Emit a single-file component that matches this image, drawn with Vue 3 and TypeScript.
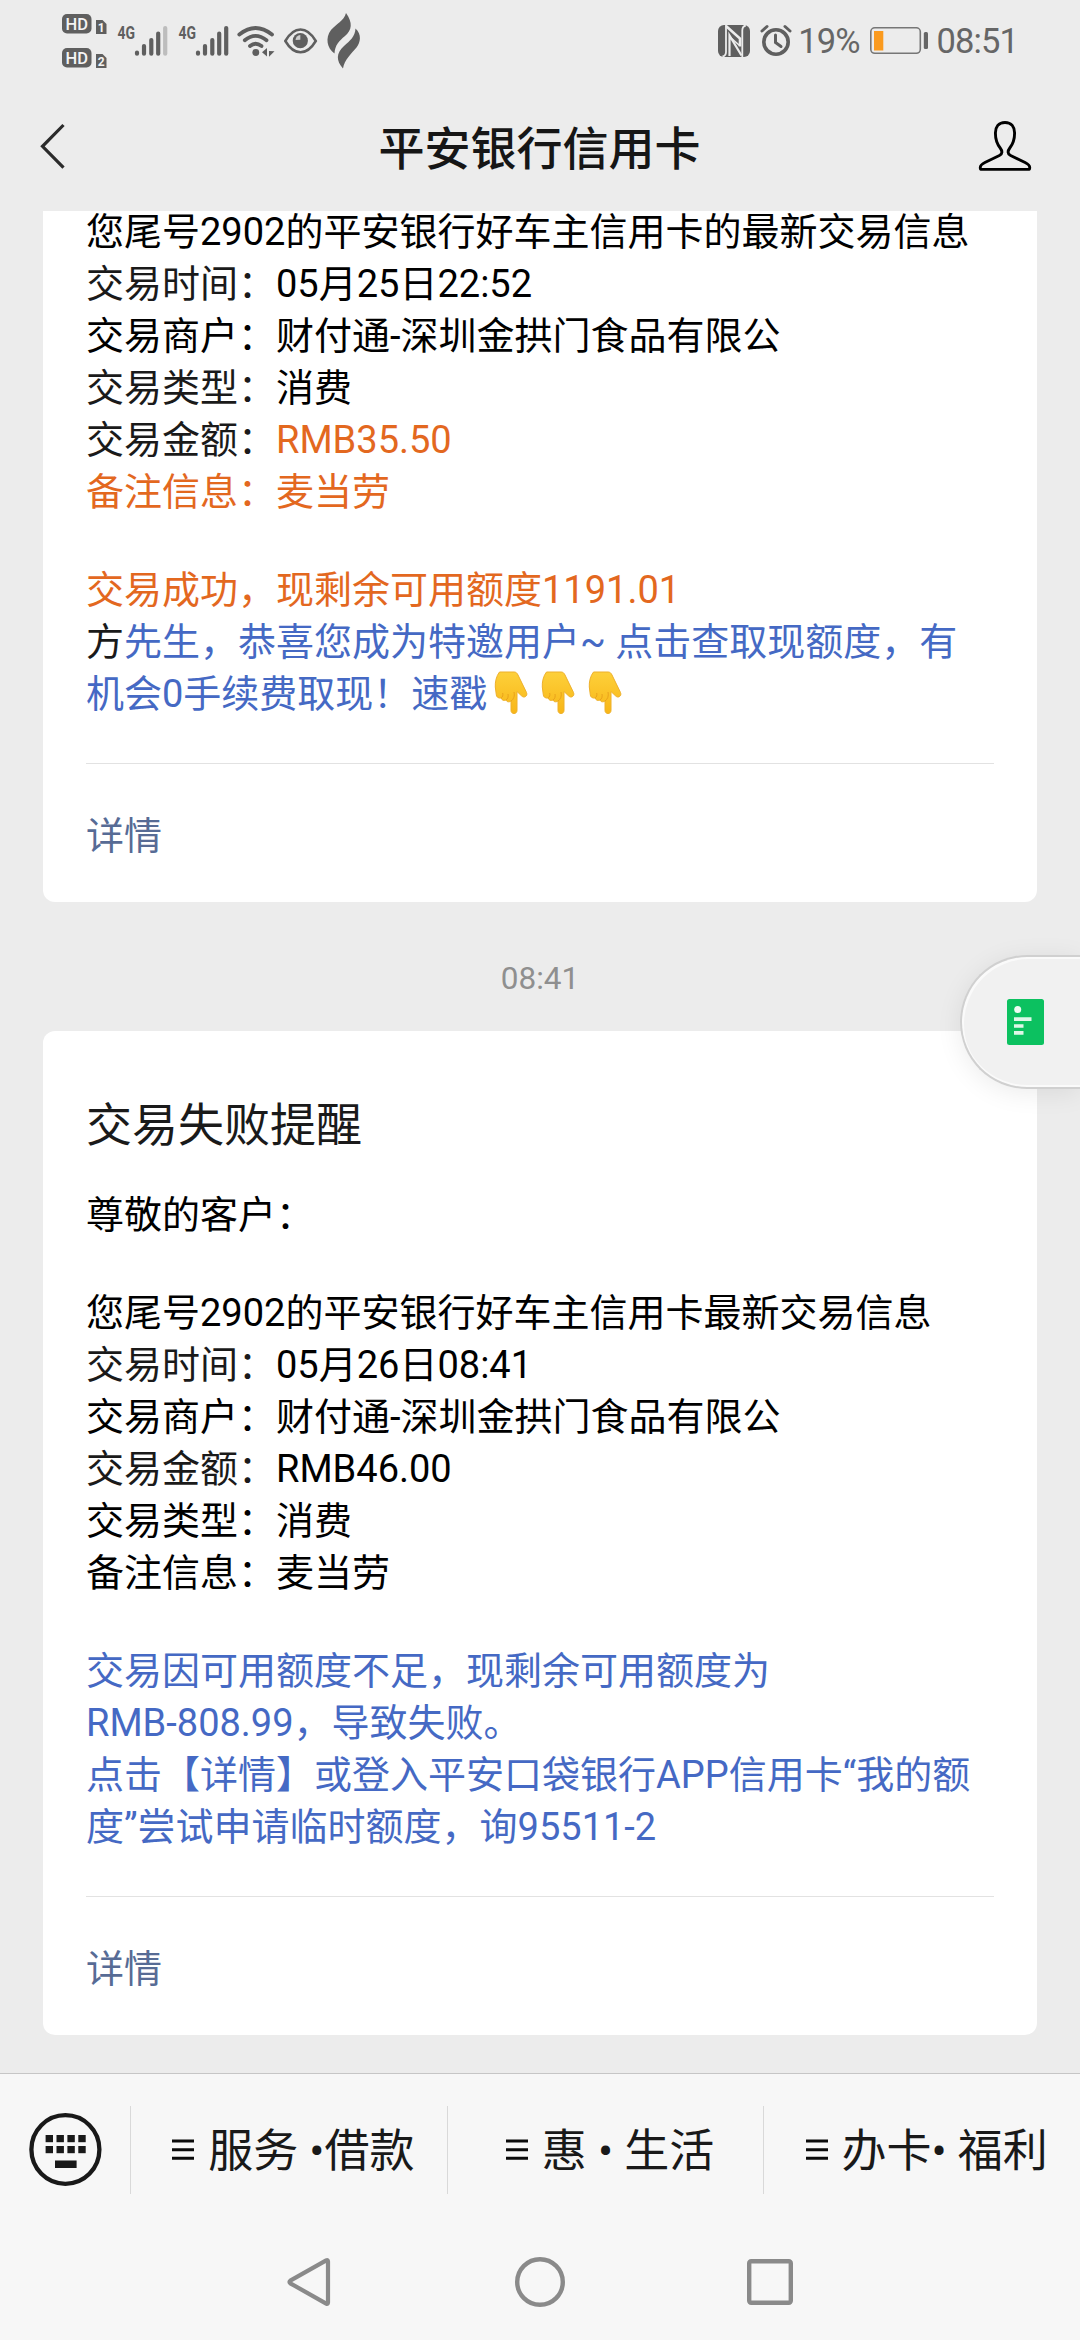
<script setup lang="ts">
type Tone = 'ink' | 'soft' | 'orange' | 'blue'

interface Span {
  text: string
  tone: Tone
  hands?: number
}

interface Card {
  title?: string
  blocks: Span[][][]
}

const field = (label: string, value: string, labelTone: Tone = 'ink', valueTone: Tone = 'ink'): Span[] => [
  { text: label + '：', tone: labelTone },
  { text: value, tone: valueTone },
]

const first: Card = {
  blocks: [
    [
      [{ text: '您尾号2902的平安银行好车主信用卡的最新交易信息', tone: 'ink' }],
      field('交易时间', '05月25日22:52', 'soft'),
      field('交易商户', '财付通-深圳金拱门食品有限公'),
      field('交易类型', '消费', 'soft'),
      field('交易金额', 'RMB35.50', 'soft', 'orange'),
      field('备注信息', '麦当劳', 'orange', 'orange'),
    ],
    [
      [{ text: '交易成功，现剩余可用额度1191.01', tone: 'orange' }],
      [
        { text: '方', tone: 'soft' },
        { text: '先生，恭喜您成为特邀用户~ 点击查取现额度，有', tone: 'blue' },
      ],
      [{ text: '机会0手续费取现！速戳', tone: 'blue', hands: 3 }],
    ],
  ],
}

const second: Card = {
  title: '交易失败提醒',
  blocks: [
    [[{ text: '尊敬的客户：', tone: 'ink' }]],
    [
      [{ text: '您尾号2902的平安银行好车主信用卡最新交易信息', tone: 'ink' }],
      field('交易时间', '05月26日08:41', 'soft'),
      field('交易商户', '财付通-深圳金拱门食品有限公'),
      field('交易金额', 'RMB46.00', 'soft'),
      field('交易类型', '消费'),
      field('备注信息', '麦当劳'),
    ],
    [
      [{ text: '交易因可用额度不足，现剩余可用额度为', tone: 'blue' }],
      [{ text: 'RMB-808.99，导致失败。', tone: 'blue' }],
      [{ text: '点击【详情】或登入平安口袋银行APP信用卡“我的额', tone: 'blue' }],
      [{ text: '度”尝试申请临时额度，询95511-2', tone: 'blue' }],
    ],
  ],
}

const entries: { card: Card; time?: string }[] = [{ card: first }, { card: second, time: '08:41' }]
const menus = ['服务 •借款', '惠 • 生活', '办卡• 福利']
const signals = [
  { id: 1, last: '#bdbdbd' },
  { id: 2, last: '#5f5f5f' },
]
</script>

<template>
  <div class="screen">
    <div class="status">
      <svg class="hd" width="46" height="56" viewBox="61 13 46 56">
        <g v-for="n in 2" :key="n" :transform="`translate(0 ${(n - 1) * 34})`">
          <rect x="62" y="14" width="29.5" height="19.5" rx="5" fill="#5f5f5f" />
          <text x="76.8" y="29.6" class="hd-text" text-anchor="middle">HD</text>
          <path d="M96 20h6.5l4 4V34H96z" fill="#5f5f5f" />
          <text x="101.2" y="31.600" class="sim-text" text-anchor="middle">{{ n }}</text>
        </g>
      </svg>
      <svg v-for="s in signals" :key="s.id" class="signal" width="50" height="32" viewBox="118 24 50 32">
        <text x="117.5" y="38" class="net-text" textLength="17.5" lengthAdjust="spacingAndGlyphs">4G</text>
        <g stroke="#5f5f5f" stroke-width="4.2" stroke-linecap="round">
          <path d="M137 51.5v1.2M144 45v7.7M151.3 39v13.7M158.2 32.5v20.2" />
          <path d="M165.2 27v25.7" :stroke="s.last" />
        </g>
      </svg>
      <svg class="wifi" width="38" height="32" viewBox="237 24 38 32">
        <g fill="none" stroke="#5f5f5f" stroke-width="3.8" stroke-linecap="round">
          <path d="M239.300 33.5Q255.500 20.500 272 33.5" />
          <path d="M244.800 39.300Q255.500 30.500 266.500 39.300" />
          <path d="M250 45Q255.500 40.500 261.500 45" />
        </g>
        <circle cx="255.800" cy="51.500" r="3.400" fill="#5f5f5f" />
        <path d="M267 47v8.500l-5-4.200zM269 50l5.500.2-5.500 5.500z" fill="#5f5f5f" />
      </svg>
      <svg class="eye" width="34" height="28" viewBox="284 26 34 28">
        <path d="M285.300 40Q292 28.500 300.500 28.500T315.800 40Q309 51.300 300.500 51.300T285.300 40z" fill="none" stroke="#5f5f5f" stroke-width="2.500" />
        <circle cx="300.300" cy="39.700" r="7.600" fill="#5f5f5f" />
        <path d="M295.500 39q.5-4.500 4.800-5v4.800z" fill="#cfcfcf" />
      </svg>
      <svg class="flame" width="34" height="58" viewBox="327 12 34 58">
        <path d="M346 13c7 10 6 17-1 23-6 5-10 9-10.500 17.500C327 48 325 38 331 30c5-6 13-9 15-17z" fill="#5f5f5f" />
        <path d="M355.500 28.500c6.500 6 5 14 1 19-5 6-12 12-13.500 21-7-8-7-15 1-22.500 6-5.500 11-9 11.500-17.500z" fill="#5f5f5f" />
      </svg>
      <div class="status-right">
        <svg width="32" height="32" viewBox="716 24 32 32">
          <rect x="716" y="24" width="32" height="32" rx="6" fill="#5f5f5f" />
          <g fill="none" stroke="#ececec">
            <path d="M724 24v27c0 2.500-1.300 4-3.500 4.500M740.300 56V29.500c0-2.500 1.300-4.500 3.500-5" stroke-width="1.800" />
            <path d="M724 25l14 12.500v8" stroke-width="2.600" />
            <path d="M727.500 55V34.500l12 20" stroke-width="2.200" />
            <path d="M728 36l9.500 8.500" stroke-width="1.600" />
          </g>
        </svg>
        <svg class="alarm" width="32" height="33" viewBox="758 23.500 32 33">
          <circle cx="774" cy="41.500" r="12.200" fill="none" stroke="#5f5f5f" stroke-width="3.600" />
          <path d="M773.500 34.500v7.500l5.500 4" fill="none" stroke="#5f5f5f" stroke-width="3" stroke-linecap="round" />
          <path d="M760 30.500l5-4.500M788 30.500l-5-4.500" stroke="#5f5f5f" stroke-width="3" stroke-linecap="round" />
        </svg>
        <span>19%</span>
        <svg class="battery" width="60" height="30" viewBox="866 26 60 30">
          <rect x="867.800" y="27.800" width="49.500" height="25.500" rx="4" fill="none" stroke="#767676" stroke-width="1.600" />
          <rect x="871" y="31" width="9.300" height="19.500" fill="#fa9a1e" />
          <rect x="920.800" y="32" width="4.200" height="17" rx="1.500" fill="#666" />
        </svg>
        <span>08:51</span>
      </div>
    </div>

    <header class="header">
      <svg class="back" width="26" height="48" viewBox="40 122 26 48">
        <path d="M63.500 125L42.500 146.300 63.500 167.700" fill="none" stroke="#2b2b2b" stroke-width="3.200" />
      </svg>
      <h1>平安银行信用卡</h1>
      <svg class="person" width="54" height="52" viewBox="978 121 54 52">
        <path
          d="M1005 123.500c-6.500 0-9.600 4.500-9.600 10.500 0 7 2 11.500 4.800 15 2.300 3 2.400 6-.8 7.500l-14.500 7c-3 1.500-4.600 2.700-4.600 4.800v.7c0 .9.600 1.400 1.500 1.400h46.400c.9 0 1.500-.5 1.500-1.400v-.7c0-2.100-1.600-3.300-4.600-4.800l-14.500-7c-3.200-1.500-3.100-4.500-.8-7.500 2.800-3.500 4.800-8 4.800-15 0-6-3.100-10.500-9.600-10.500z"
          fill="none" stroke="#000" stroke-width="2.900" />
      </svg>
    </header>

    <main class="chat">
      <template v-for="(entry, i) in entries" :key="i">
        <div v-if="entry.time" class="time">{{ entry.time }}</div>
        <article class="card">
          <h2 v-if="entry.card.title">{{ entry.card.title }}</h2>
          <div class="body">
            <div v-for="(block, b) in entry.card.blocks" :key="b">
              <p v-for="(line, l) in block" :key="l"><span v-for="(s, k) in line" :key="k" :class="s.tone">{{ s.text }}<svg v-for="h in s.hands ?? 0" :key="h" class="hand" width="47" height="44" viewBox="0 0 47 44">
                <defs>
                  <linearGradient id="skin" x1="0" y1="0" x2="0" y2="1">
                    <stop offset="0" stop-color="#fdd03a" />
                    <stop offset="1" stop-color="#f8b617" />
                  </linearGradient>
                </defs>
                <path d="M12.500 1h14.500c2 0 3 1 4 3l8.500 17.500c1.500 3.500-2.300 6-4.800 3.500L30 20.500V39.500c0 4-6 4-6 0V30c-2.500 1.700-4.500.5-5-1-2.500 1-4.300 0-4.800-2-3 .5-5-1-5-4L8.300 16c-.3-5 1-11 4.200-15z" fill="url(#skin)" stroke="#eeb02a" stroke-width="1" />
                <path d="M24 30c2.500-1.500 4-5 3-9M19 29c2-1 2.500-4 2-6M14.200 27c1.500-1 2-3 1.500-5" fill="none" stroke="#e9a21b" stroke-width="1" />
              </svg></span></p>
            </div>
          </div>
          <div class="detail">详情</div>
        </article>
      </template>
    </main>

    <div class="float">
      <svg width="37" height="46" viewBox="0 0 37 46">
        <rect width="37" height="46" rx="2.500" fill="#0cc160" />
        <circle cx="10.700" cy="10.500" r="3.500" fill="#effbf3" />
        <path d="M7 20.200h17.500M7 27h9.500M7 33.800h9.500" stroke="#dff7e8" stroke-width="3.700" />
      </svg>
    </div>

    <footer class="menu">
      <div class="keyboard">
        <svg width="74" height="76" viewBox="28 2112 74 76">
          <ellipse cx="65.400" cy="2149.500" rx="34" ry="34.300" fill="none" stroke="#191919" stroke-width="4.300" />
          <g fill="#191919">
            <template v-for="r in 2" :key="r">
              <rect v-for="c in 4" :key="c" :x="34.700 + c * 10.900" :y="2124 + r * 11" width="7.400" height="7.200" />
            </template>
            <rect x="55" y="2160.500" width="21.600" height="7.500" />
          </g>
        </svg>
      </div>
      <div v-for="m in menus" :key="m" class="menu-item">
        <svg width="22" height="22" viewBox="0 0 22 22">
          <path d="M0 2h22M0 10.700h22M0 19.300h22" stroke="#0a0a0a" stroke-width="3" />
        </svg>
        <span>{{ m }}</span>
      </div>
    </footer>

    <nav class="nav">
      <svg width="46" height="52" viewBox="286 2256 46 52">
        <path d="M326.200 2260.400Q328 2259.500 328 2261.500V2302.500Q328 2304.500 326.200 2303.600L290.300 2283.300Q288.600 2282 290.300 2280.700Z" fill="none" stroke="#8a8a8a" stroke-width="4.200" stroke-linejoin="round" />
      </svg>
      <svg width="52" height="52" viewBox="0 0 52 52">
        <circle cx="26" cy="26" r="22.800" fill="none" stroke="#8a8a8a" stroke-width="4.400" />
      </svg>
      <svg width="46" height="46" viewBox="0 0 46 46">
        <rect x="2.200" y="2.200" width="41.600" height="41.600" rx="2" fill="none" stroke="#8a8a8a" stroke-width="4.400" />
      </svg>
    </nav>
  </div>
</template>

<style>
body {
  background: #ededed;
}
</style>

<style scoped>
.screen {
  position: relative;
  display: flex;
  flex-direction: column;
  width: 1080px;
  height: 2340px;
  overflow: hidden;
  background: #ececec;
  color: #000;
  font-family: Roboto, 'Noto Sans CJK SC', sans-serif;
}
svg {
  display: block;
  flex: none;
  overflow: visible;
}
.status {
  display: flex;
  align-items: center;
  height: 81px;
  box-sizing: border-box;
  padding: 0 62px 0 61px;
}
.signal {
  margin-left: 11px;
}
.wifi {
  margin-left: 8px;
}
.eye {
  margin-left: 9px;
}
.flame {
  margin-left: 9px;
}
.status-right {
  display: flex;
  align-items: center;
  flex: none;
  margin-left: auto;
  color: #666;
  font-size: 34.500px;
  line-height: 40px;
  letter-spacing: -0.900px;
}
.alarm {
  margin: 0 6px 0 10px;
}
.battery {
  margin: 0 8px 0 9px;
}
.hd-text {
  fill: #f4f4f4;
  font: 500 16.500px Roboto, sans-serif;
}
.sim-text {
  fill: #f4f4f4;
  font: 700 12px Roboto, sans-serif;
}
.net-text {
  fill: #5f5f5f;
  font: 700 18px Roboto, sans-serif;
}
.header {
  display: flex;
  align-items: center;
  justify-content: space-between;
  height: 130px;
  flex: none;
  box-sizing: border-box;
  padding: 0 48px 0 40px;
}
.header h1 {
  margin: 0 0 0 35px;
  padding-top: 5px;
  font-size: 46px;
  line-height: 60px;
  font-weight: 500;
  color: #161616;
}
.chat {
  display: flex;
  flex-direction: column;
  justify-content: flex-end;
  flex: none;
  height: 1862px;
  box-sizing: border-box;
  padding: 0 43px 38px;
  overflow: hidden;
}
.card {
  flex: none;
  box-sizing: border-box;
  padding: 64px 43px 0;
  border-radius: 12px;
  background: #fff;
}
.card h2 {
  margin: 0 0 34px;
  font-size: 46px;
  line-height: 60px;
  font-weight: 400;
  color: #1a1a1a;
}
.body {
  display: flex;
  flex-direction: column;
  gap: 46px;
  padding-bottom: 43px;
  border-bottom: 1px solid #e2e2e2;
}
.body p {
  margin: 0;
  height: 52px;
  font-size: 38px;
  line-height: 52px;
  white-space: nowrap;
}
.soft {
  color: #1a1a1a;
}
.orange {
  color: #e3681f;
}
.blue {
  color: #4569c4;
}
.hand {
  display: inline-block;
  vertical-align: -8px;
}
.detail {
  height: 138px;
  box-sizing: border-box;
  padding-top: 46px;
  font-size: 38px;
  line-height: 52px;
  color: #576b95;
}
.time {
  flex: none;
  height: 129px;
  padding-top: 24px;
  box-sizing: border-box;
  text-align: center;
  font-size: 31.500px;
  line-height: 106px;
  color: #8f8f8f;
}
.float {
  position: absolute;
  top: 955px;
  right: 0;
  display: flex;
  align-items: center;
  width: 120px;
  height: 134px;
  box-sizing: border-box;
  padding-left: 45px;
  border: 2px solid #d0d0d0;
  border-right: 0;
  border-radius: 67px 0 0 67px;
  background: rgba(241, 241, 241, 0.97);
  box-shadow: inset 2px 2px 0 #fafafa, inset 0 -2px 0 #fafafa, 0 4px 26px rgba(0, 0, 0, 0.08);
}
.menu {
  display: flex;
  align-items: center;
  flex: none;
  height: 150px;
  box-sizing: border-box;
  padding-top: 2px;
  border-top: 1px solid #c6c6c6;
  background: #f7f7f7;
}
.keyboard {
  width: 130px;
  box-sizing: border-box;
  padding-left: 28px;
}
.menu-item {
  display: flex;
  align-items: center;
  justify-content: center;
  flex: 1;
  gap: 14px;
  height: 88px;
  box-sizing: border-box;
  padding-left: 9px;
  border-left: 1px solid #d9d9d9;
  font-size: 45px;
  line-height: 60px;
  white-space: nowrap;
  color: #191919;
}
.menu-item span {
  padding-top: 4px;
}
.nav {
  display: flex;
  align-items: center;
  flex: 1;
  box-sizing: border-box;
  padding: 1px 287px 0 286px;
  justify-content: space-between;
  background: #f7f7f7;
}
</style>
